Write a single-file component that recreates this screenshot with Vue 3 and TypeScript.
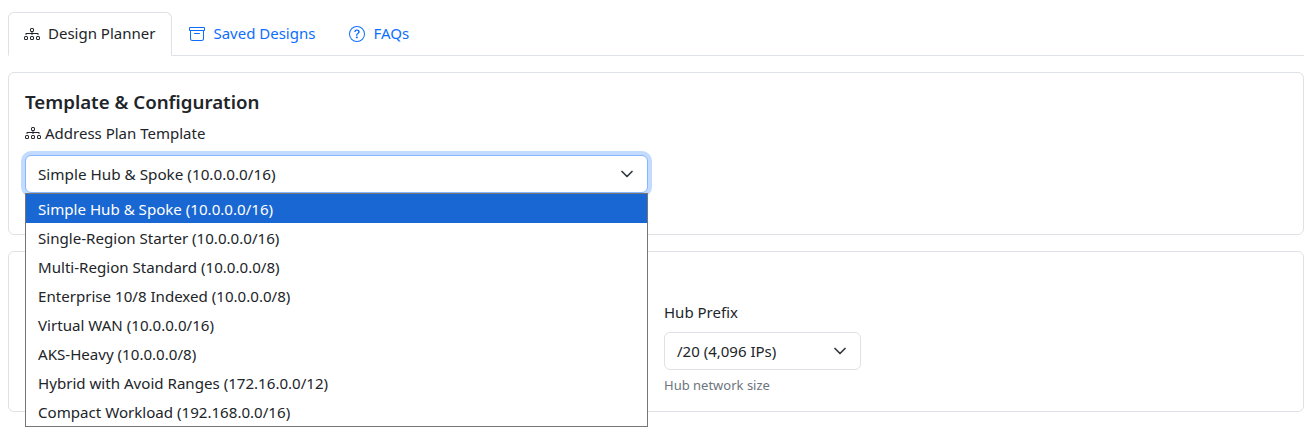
<script setup lang="ts">
const options: string[] = [
  'Simple Hub & Spoke (10.0.0.0/16)',
  'Single-Region Starter (10.0.0.0/16)',
  'Multi-Region Standard (10.0.0.0/8)',
  'Enterprise 10/8 Indexed (10.0.0.0/8)',
  'Virtual WAN (10.0.0.0/16)',
  'AKS-Heavy (10.0.0.0/8)',
  'Hybrid with Avoid Ranges (172.16.0.0/12)',
  'Compact Workload (192.168.0.0/16)',
]
const diagram = 'M6 3.5A1.5 1.5 0 0 1 7.5 2h1A1.5 1.5 0 0 1 10 3.5v1A1.5 1.5 0 0 1 8.5 6v1H14a.5.5 0 0 1 .5.5v1a.5.5 0 0 1-1 0V8h-5v.5a.5.5 0 0 1-1 0V8h-5v.5a.5.5 0 0 1-1 0v-1A.5.5 0 0 1 2 7h5.5V6A1.5 1.5 0 0 1 6 4.5zM8.5 5a.5.5 0 0 0 .5-.5v-1a.5.5 0 0 0-.5-.5h-1a.5.5 0 0 0-.5.5v1a.5.5 0 0 0 .5.5zM0 11.5A1.5 1.5 0 0 1 1.5 10h1A1.5 1.5 0 0 1 4 11.5v1A1.5 1.5 0 0 1 2.5 14h-1A1.5 1.5 0 0 1 0 12.5zm1.5-.5a.5.5 0 0 0-.5.5v1a.5.5 0 0 0 .5.5h1a.5.5 0 0 0 .5-.5v-1a.5.5 0 0 0-.5-.5zm4.5.5A1.5 1.5 0 0 1 7.5 10h1a1.5 1.5 0 0 1 1.5 1.5v1A1.5 1.5 0 0 1 8.5 14h-1A1.5 1.5 0 0 1 6 12.5zm1.5-.5a.5.5 0 0 0-.5.5v1a.5.5 0 0 0 .5.5h1a.5.5 0 0 0 .5-.5v-1a.5.5 0 0 0-.5-.5zm4.5.5a1.5 1.5 0 0 1 1.5-1.5h1a1.5 1.5 0 0 1 1.5 1.5v1a1.5 1.5 0 0 1-1.5 1.5h-1a1.5 1.5 0 0 1-1.5-1.5zm1.5-.5a.5.5 0 0 0-.5.5v1a.5.5 0 0 0 .5.5h1a.5.5 0 0 0 .5-.5v-1a.5.5 0 0 0-.5-.5z'
const archive = 'M0 2a1 1 0 0 1 1-1h14a1 1 0 0 1 1 1v2a1 1 0 0 1-1 1v7.5a2.5 2.5 0 0 1-2.5 2.5h-9A2.5 2.5 0 0 1 1 12.5V5a1 1 0 0 1-1-1zm2 3v7.5A1.5 1.5 0 0 0 3.5 14h9a1.5 1.5 0 0 0 1.5-1.5V5zm13-3H1v2h14zM5 7.5a.5.5 0 0 1 .5-.5h5a.5.5 0 0 1 0 1h-5a.5.5 0 0 1-.5-.5'
const question = 'M8 15A7 7 0 1 1 8 1a7 7 0 0 1 0 14m0 1A8 8 0 1 0 8 0a8 8 0 0 0 0 16M5.255 5.786a.237.237 0 0 0 .241.247h.825c.138 0 .248-.113.266-.25.09-.656.54-1.134 1.342-1.134.686 0 1.314.343 1.314 1.168 0 .635-.374.927-.965 1.371-.673.489-1.206 1.06-1.168 1.987l.003.217a.25.25 0 0 0 .25.246h.811a.25.25 0 0 0 .25-.25v-.105c0-.718.273-.927 1.01-1.486.609-.463 1.244-.977 1.244-2.056 0-1.511-1.276-2.241-2.673-2.241-1.267 0-2.655.59-2.75 2.286m1.557 5.763c0 .533.425.927 1.01.927.609 0 1.028-.394 1.028-.927 0-.552-.42-.94-1.029-.94-.584 0-1.009.388-1.009.94'
const tabs = [
  { label: 'Design Planner', icon: diagram, active: true },
  { label: 'Saved Designs', icon: archive, active: false },
  { label: 'FAQs', icon: question, active: false },
]
</script>

<template>
  <div class="page">
    <nav class="tabs">
      <a v-for="t in tabs" :key="t.label" class="tab" :class="{ active: t.active }">
        <svg class="ico" viewBox="0 0 16 16" fill="currentColor"><path fill-rule="evenodd" :d="t.icon" /></svg>
        <span class="tab-text">{{ t.label }}</span>
      </a>
    </nav>

    <section class="card first">
      <h2 class="title">Template &amp; Configuration</h2>
      <label class="plan-label">
        <svg class="ico" viewBox="0 0 16 16" fill="currentColor"><path fill-rule="evenodd" :d="diagram" /></svg>
        Address Plan Template
      </label>
      <div class="open-select">
        <div class="select focus">
          <span class="option-text">{{ options[0] }}</span>
          <svg class="chev" viewBox="0 0 16 16"><path d="m3 5.5 5 5 5-5" /></svg>
        </div>
        <ul class="listbox">
          <li v-for="(o, i) in options" :key="o" :class="{ sel: i === 0 }">{{ o }}</li>
        </ul>
      </div>
    </section>

    <section class="card second">
      <div class="grid">
        <div class="field">
          <label class="field-label">Hub Prefix</label>
          <div class="select small">
            <span>/20 (4,096 IPs)</span>
            <svg class="chev" viewBox="0 0 16 16"><path d="m3 5.5 5 5 5-5" /></svg>
          </div>
          <div class="hint">Hub network size</div>
        </div>
      </div>
    </section>
  </div>
</template>

<style>
html, body { margin: 0; background: #fff; }
</style>

<style scoped>
.page {
  min-height: 431px;
  box-sizing: border-box;
  padding: 12px 8px 0;
  font-family: "Noto Sans", "Open Sans", sans-serif;
  font-size: 15px;
  color: #212529;
}
.tabs {
  display: flex;
  height: 44px;
  box-sizing: border-box;
  border-bottom: 1px solid #dee2e6;
}
.tab {
  display: flex;
  align-items: center;
  gap: 8px;
  height: 44px;
  box-sizing: border-box;
  padding: 0 16px 1px 15px;
  color: #0d6efd;
  border: 1px solid transparent;
  border-radius: 6px 6px 0 0;
}
.tab + .tab { margin-left: 1px; }
.tab.active {
  color: #212529;
  background: #fff;
  border-color: #dee2e6 #dee2e6 #fff;
}
.tab-text { padding-bottom: 2px; }
.ico { width: 16px; height: 16px; flex: none; }
.card {
  border: 1px solid #dee2e6;
  border-radius: 6px;
  box-sizing: border-box;
  padding: 16px;
}
.first { margin-top: 16px; height: 163px; }
.second { margin-top: 16px; height: 161px; padding-top: 48px; }
.title {
  margin: 0;
  font-size: 18.7px;
  line-height: 25px;
  font-weight: 600;
}
.plan-label {
  display: flex;
  align-items: center;
  gap: 4px;
  height: 24px;
  margin-top: 7px;
}
.open-select {
  position: relative;
  margin-top: 10px;
  width: 623px;
}
.select {
  display: flex;
  align-items: center;
  justify-content: space-between;
  box-sizing: border-box;
  height: 38px;
  padding: 0 12px;
  border: 1px solid #dee2e6;
  border-radius: 6px;
  background: #fff;
}
.select.focus {
  border-color: #86b7fe;
  box-shadow: 0 0 0 4px rgba(13, 110, 253, 0.25);
}
.option-text { font-size: 15.25px; }
.chev {
  width: 16px;
  height: 16px;
  flex: none;
  fill: none;
  stroke: #343a40;
  stroke-width: 1.7;
  stroke-linecap: round;
  stroke-linejoin: round;
}
.listbox {
  position: absolute;
  top: 38px;
  left: 0;
  width: 623px;
  box-sizing: border-box;
  margin: 0;
  padding: 0;
  list-style: none;
  background: #fff;
  border: 1px solid #767676;
  font-size: 15.1px;
  z-index: 5;
}
.listbox li {
  height: 29px;
  line-height: 31px;
  padding: 0 12px;
}
.listbox li.sel {
  background: #1967d2;
  color: #fff;
}
.grid {
  display: grid;
  grid-template-columns: repeat(6, 1fr);
  gap: 16px;
}
.field { grid-column: 4; }
.field-label {
  display: block;
  height: 24px;
  line-height: 24px;
  margin-bottom: 8px;
}
.small { width: 197px; }
.hint {
  margin-top: 5px;
  font-size: 13px;
  line-height: 20px;
  color: #6c757d;
}
</style>
